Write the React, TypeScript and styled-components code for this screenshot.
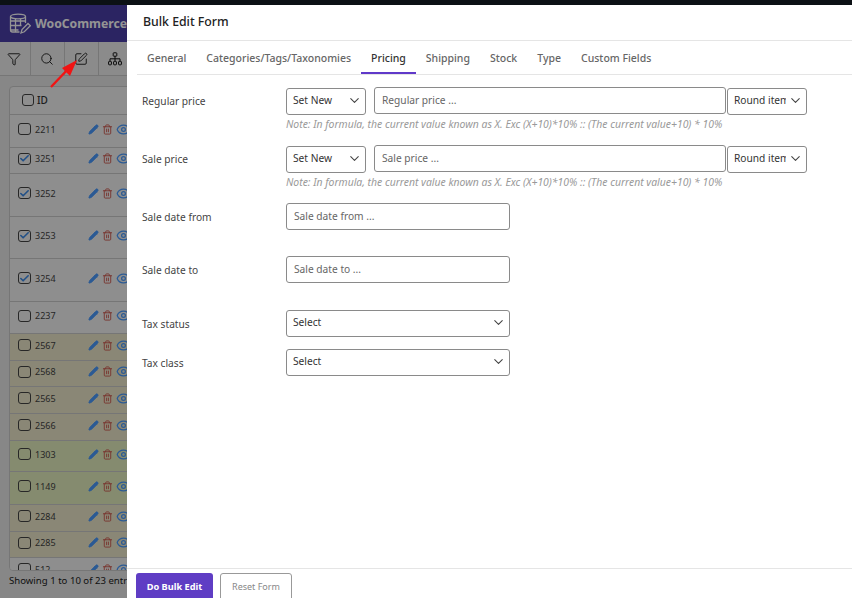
import styled, { createGlobalStyle } from 'styled-components';
import { Check, ChevronDown, Eye, Funnel, Pencil, Search, SquarePen, Trash2 } from 'lucide-react';

const rows = [
  { id: '2211', height: 33, checked: false, tint: 'plain' },
  { id: '3251', height: 26, checked: true, tint: 'plain' },
  { id: '3252', height: 43, checked: true, tint: 'plain' },
  { id: '3253', height: 42, checked: true, tint: 'plain' },
  { id: '3254', height: 43, checked: true, tint: 'plain' },
  { id: '2237', height: 32, checked: false, tint: 'plain' },
  { id: '2567', height: 27, checked: false, tint: 'yellow' },
  { id: '2568', height: 26, checked: false, tint: 'yellow' },
  { id: '2565', height: 27, checked: false, tint: 'yellow' },
  { id: '2566', height: 27, checked: false, tint: 'yellow' },
  { id: '1303', height: 31, checked: false, tint: 'green' },
  { id: '1149', height: 33, checked: false, tint: 'green' },
  { id: '2284', height: 27, checked: false, tint: 'yellow' },
  { id: '2285', height: 26, checked: false, tint: 'yellow' },
  { id: '512', height: 27, checked: false, tint: 'plain' },
];

const tabs = ['General', 'Categories/Tags/Taxonomies', 'Pricing', 'Shipping', 'Stock', 'Type', 'Custom Fields'];
const note = 'Note: In formula, the current value known as X. Exc (X+10)*10% :: (The current value+10) * 10%';

const Dropdown = ({ label, width }: { label: string; width: number }) => (
  <SelectBox $width={width}>
    <NativeSelect>
      <option>{label}</option>
    </NativeSelect>
    <SelectChevron size={15} strokeWidth={1.7} />
  </SelectBox>
);

const App = () => {
  return (
    <>
      <GlobalStyle />
      <TopStrip />
      <Page>
        <Brand>
          <svg width="22" height="22" viewBox="0 0 22 22" fill="none" stroke="currentColor" strokeWidth="1.3">
            <ellipse cx="9" cy="3.5" rx="7.5" ry="2.3" />
            <path d="M1.5 3.5V17q0 2 2 2h7M16.5 3.5V10M1.5 8h15M1.5 12.5h11M1.5 17h8M6.5 6v13M11.5 6v7" />
            <path d="M12 20l1-3.5 6-6 2.3 2.3-6 6z" />
          </svg>
          <BrandName>WooCommerce</BrandName>
        </Brand>
        <Toolbar>
          <ToolButton><Funnel size={14} strokeWidth={1.5} /></ToolButton>
          <ToolButton><Search size={14} strokeWidth={1.5} /></ToolButton>
          <ToolButton><SquarePen size={14} strokeWidth={1.5} /></ToolButton>
          <ToolButton>
            <svg width="14" height="14" viewBox="0 0 14 14" fill="none" stroke="currentColor" strokeWidth="1">
              <rect x="5.2" y="0.8" width="3.6" height="3.4" rx="0.6" />
              <path d="M7 4.2V9M2 9V6.8h10V9" />
              <rect x="0.6" y="9.4" width="2.8" height="3.4" rx="0.6" />
              <rect x="5.6" y="9.4" width="2.8" height="3.4" rx="0.6" />
              <rect x="10.6" y="9.4" width="2.8" height="3.4" rx="0.6" />
            </svg>
          </ToolButton>
        </Toolbar>
        <Table>
          <HeadRow>
            <HeadBox />
            <HeadId>ID</HeadId>
          </HeadRow>
          {rows.map(row => (
            <Row key={row.id} $height={row.height} $tint={row.tint}>
              <CheckBox>{row.checked && <Check size={11} strokeWidth={3.5} />}</CheckBox>
              <RowId>{row.id}</RowId>
              <RowIcons>
                <Pencil size={11} color="#4a9bff" fill="#4a9bff" />
                <Trash2 size={11} color="#cf5a50" />
                <Eye size={15} color="#4a9bff" />
              </RowIcons>
            </Row>
          ))}
        </Table>
        <Entries>Showing 1 to 10 of 23 entries</Entries>
      </Page>
      <Backdrop />
      <Arrow width="34" height="34" viewBox="0 0 34 34">
        <path d="M3 31L22 11" stroke="#f01414" strokeWidth="2.4" />
        <path d="M29 4L14 12l8 8z" fill="#f01414" />
      </Arrow>
      <Drawer>
        <DrawerTitle>Bulk Edit Form</DrawerTitle>
        <TabBar>
          {tabs.map(tab => (
            <Tab key={tab} $active={tab === 'Pricing'}>{tab}</Tab>
          ))}
        </TabBar>
        <Form>
          <FormRow $height={58}>
            <FieldLabel>Regular price</FieldLabel>
            <FieldStack>
              <Controls>
                <Dropdown label="Set New" width={80} />
                <ValueInput placeholder="Regular price ..." />
                <Dropdown label="Round item" width={80} />
              </Controls>
              <Note>{note}</Note>
            </FieldStack>
          </FormRow>
          <FormRow $height={58}>
            <FieldLabel>Sale price</FieldLabel>
            <FieldStack>
              <Controls>
                <Dropdown label="Set New" width={80} />
                <ValueInput placeholder="Sale price ..." />
                <Dropdown label="Round item" width={80} />
              </Controls>
              <Note>{note}</Note>
            </FieldStack>
          </FormRow>
          <FormRow $height={53}>
            <FieldLabel>Sale date from</FieldLabel>
            <WideInput placeholder="Sale date from ..." />
          </FormRow>
          <FormRow $height={53}>
            <FieldLabel>Sale date to</FieldLabel>
            <WideInput placeholder="Sale date to ..." />
          </FormRow>
          <FormRow $height={39}>
            <TaxLabel>Tax status</TaxLabel>
            <Dropdown label="Select" width={224} />
          </FormRow>
          <FormRow $height={39}>
            <TaxLabel>Tax class</TaxLabel>
            <Dropdown label="Select" width={224} />
          </FormRow>
        </Form>
        <DrawerFooter>
          <PrimaryButton>Do Bulk Edit</PrimaryButton>
          <ResetButton>Reset Form</ResetButton>
        </DrawerFooter>
      </Drawer>
    </>
  );
};

const GlobalStyle = createGlobalStyle`
  html, body {
    margin: 0;
    height: 100%;
    overflow: hidden;
    background: #e9e9e9;
    font-family: "Noto Sans", "Open Sans", sans-serif;
  }

  * {
    box-sizing: border-box;
  }
`;

const TopStrip = styled.div`
  height: 5px;
  background: #0c1115;
`;

const Page = styled.div`
  display: flex;
  flex-direction: column;
  height: 593px;
`;

const Brand = styled.div`
  display: flex;
  align-items: center;
  gap: 4px;
  flex: none;
  padding-left: 9px;
  height: 37px;
  background: #4b3eaa;
  color: #fff;
`;

const BrandName = styled.span`
  font-size: 12.2px;
  font-weight: 700;
`;

const Toolbar = styled.div`
  display: flex;
  flex: none;
  height: 34px;
  border-bottom: 1px solid #ccc;
  background: #f0f0f0;
`;

const ToolButton = styled.div`
  display: flex;
  align-items: center;
  justify-content: center;
  padding-right: 2px;
  width: 34px;
  border-right: 1px solid #ccc;
  color: #111;

  &:first-child {
    padding-right: 3px;
    width: 31px;
  }
`;

const Table = styled.div`
  flex: none;
  margin: 10px 0 0 9px;
  border: 1px solid #ccc;
  border-radius: 4px 0 0 4px;
  width: 840px;
  height: 485px;
  overflow: hidden;
  background: #f4f4f4;
`;

const HeadRow = styled.div`
  display: flex;
  align-items: center;
  padding: 0 0 2px 12px;
  height: 28px;
  border-bottom: 1px solid #ccc;
`;

const HeadBox = styled.span`
  flex: none;
  border: 1px solid #444;
  border-radius: 3px;
  width: 12px;
  height: 12px;
`;

const HeadId = styled.span`
  margin-left: 3px;
  color: #333;
  font-size: 10px;
  font-weight: 500;
`;

const tints: Record<string, string> = {
  plain: '#f4f4f4',
  yellow: '#eee9cb',
  green: '#e6f0c0',
};

const Row = styled.div<{ $height: number; $tint: string }>`
  display: flex;
  align-items: center;
  flex: none;
  padding: 0 0 4px 8px;
  height: ${({ $height }) => $height}px;
  border-bottom: 1px solid #ccc;
  background: ${({ $tint }) => tints[$tint]};
`;

const CheckBox = styled.span`
  display: flex;
  align-items: center;
  justify-content: center;
  flex: none;
  border: 1px solid #444;
  border-radius: 3px;
  width: 13px;
  height: 12px;
  color: #3a8ae8;
`;

const RowId = styled.span`
  margin-left: 4px;
  width: 53px;
  color: #444;
  font-size: 9px;
`;

const RowIcons = styled.span`
  display: flex;
  align-items: center;
  gap: 3px;
`;

const Entries = styled.div`
  margin: 3px 0 0 9px;
  color: #222;
  font-size: 9.6px;
`;

const Backdrop = styled.div`
  position: fixed;
  inset: 5px 0 0;
  background: rgba(0 0 0 / 42%);
`;

const Arrow = styled.svg`
  position: fixed;
  top: 56px;
  left: 48px;
`;

const Drawer = styled.aside`
  position: fixed;
  top: 5px;
  right: 0;
  bottom: 0;
  left: 127px;
  display: flex;
  flex-direction: column;
  background: #fff;
`;

const DrawerTitle = styled.div`
  flex: none;
  padding: 8px 0 0 16px;
  height: 36px;
  border-bottom: 1px solid #e5e5e5;
  color: #222;
  font-size: 12.3px;
  font-weight: 500;
  line-height: 17px;
`;

const TabBar = styled.div`
  display: flex;
  flex: none;
  margin-left: 10px;
  height: 34px;
  border-bottom: 1px solid #e5e5e5;
`;

const Tab = styled.div<{ $active: boolean }>`
  padding: 10px 10px 0;
  height: 33px;
  border-bottom: 2px solid ${({ $active }) => ($active ? '#6039c9' : 'transparent')};
  color: ${({ $active }) => ($active ? '#333' : '#666')};
  font-size: 10.5px;
  font-weight: 500;
  line-height: 15px;
`;

const Form = styled.div`
  flex: 1;
  padding: 12px 0 0 15px;
`;

const FormRow = styled.div<{ $height: number }>`
  display: flex;
  align-items: flex-start;
  height: ${({ $height }) => $height}px;
`;

const FieldLabel = styled.label`
  flex: none;
  width: 144px;
  color: #444;
  font-size: 10.2px;
  line-height: 28px;
`;

const TaxLabel = styled(FieldLabel)`
  line-height: 30px;
`;

const FieldStack = styled.div`
  display: flex;
  flex-direction: column;
`;

const Controls = styled.div`
  display: flex;
  gap: 1px;
`;

const Note = styled.div`
  margin-top: 3px;
  color: #999;
  font-size: 10.4px;
  font-style: italic;
  line-height: 14px;
`;

const ValueInput = styled.input`
  margin-left: 7px;
  padding: 0 7px 2px;
  border: 1px solid #8a8a8a;
  border-radius: 3px;
  width: 352px;
  height: 27px;
  color: #333;
  font-family: inherit;
  font-size: 10.2px;

  &::placeholder {
    color: #666;
  }
`;

const WideInput = styled(ValueInput)`
  margin-left: 0;
  width: 224px;
`;

const SelectBox = styled.div<{ $width: number }>`
  position: relative;
  flex: none;
  width: ${({ $width }) => $width}px;
  height: 27px;
`;

const NativeSelect = styled.select`
  appearance: none;
  padding: 0 20px 2px 6px;
  border: 1px solid #8a8a8a;
  border-radius: 3px;
  width: 100%;
  height: 100%;
  background: #fff;
  color: #333;
  font-family: inherit;
  font-size: 10.2px;
`;

const SelectChevron = styled(ChevronDown)`
  position: absolute;
  top: 6px;
  right: 4px;
  color: #444;
  pointer-events: none;
`;

const DrawerFooter = styled.div`
  display: flex;
  flex: none;
  align-items: flex-start;
  gap: 7px;
  padding: 4px 0 0 9px;
  height: 30px;
  border-top: 1px solid #e5e5e5;
`;

const PrimaryButton = styled.button`
  flex: none;
  padding: 0;
  border: 0;
  border-radius: 3px 3px 0 0;
  width: 77px;
  height: 27px;
  background: #5f3dc4;
  color: #fff;
  font-family: inherit;
  font-size: 9.2px;
  font-weight: 700;
`;

const ResetButton = styled.button`
  flex: none;
  padding: 0;
  border: 1px solid #999;
  border-radius: 3px 3px 0 0;
  width: 72px;
  height: 27px;
  background: #fff;
  color: #888;
  font-family: inherit;
  font-size: 9px;
`;

export default App;
